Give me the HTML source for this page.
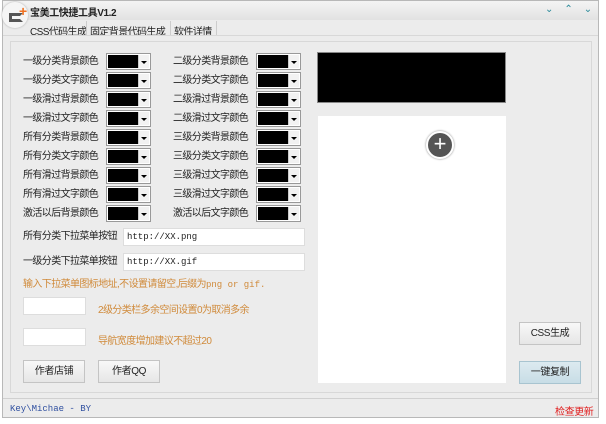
<!DOCTYPE html><html><head><meta charset="utf-8"><style>
body{margin:0;width:606px;height:424px;background:#fff;font-family:"Liberation Sans","Noto Sans CJK SC",sans-serif;font-size:10px;color:#222;position:relative;overflow:hidden}
.a{position:absolute;white-space:nowrap}
.win{left:2px;top:0;width:597px;height:418px;background:#ececec;border:1px solid #b8b8b8;box-sizing:border-box}
.lb{position:absolute;font-size:10px;letter-spacing:-0.6px;line-height:14px;white-space:nowrap}
.cb{position:absolute;width:45px;height:17px;border:1px solid #999;background:#fff;box-sizing:border-box}
.cb i{position:absolute;left:1px;top:1px;width:31px;height:13px;background:#000}
.cb b{position:absolute;right:1px;top:1px;width:10px;height:13px;background:#f2f2f2;border-left:1px solid #ccc}
.cb b:after{content:"";position:absolute;left:2px;top:6px;border:3px solid transparent;border-top:3px solid #000}
.in{position:absolute;background:#fff;border:1px solid #ddd;box-sizing:border-box;font-family:"Liberation Mono",monospace;font-size:9px;line-height:16px;padding-left:3px}
.bt{position:absolute;width:62px;height:23px;border:1px solid #c4c4c4;background:linear-gradient(#f8f8f8,#e6e6e6);box-sizing:border-box;text-align:center;line-height:21px;font-size:10px;letter-spacing:-0.4px}
.or{position:absolute;color:#d08a3a;font-size:10px;letter-spacing:-0.6px;white-space:nowrap}
</style></head><body>
<div class="a win"></div>
<div class="a" style="left:3px;top:1px;width:595px;height:19px;background:linear-gradient(#f4f4f4,#e2e2e2)"></div>
<div class="a" style="left:30px;top:4px;font-weight:bold;font-size:10px;letter-spacing:-0.4px">宝美工快捷工具V1.2</div>
<div class="a" style="left:2px;top:2px;width:26px;height:26px;border-radius:13px;background:#f5f5f5;box-shadow:0 0 2px #aaa"></div>
<div class="a" style="left:9px;top:13px;height:9px;border:3px solid #555;border-right-color:transparent;box-sizing:border-box;width:14px"></div>
<div class="a" style="left:19px;top:4px;color:#f07020;font-weight:bold;font-size:14px;line-height:14px">+</div>
<div class="a" style="left:545px;top:4px;color:#2a8a9a;font-size:10px;letter-spacing:11px">⌄⌃⌄</div>
<div class="a" style="left:30px;top:23px;font-size:10px;letter-spacing:-0.6px">CSS代码生成</div>
<div class="a" style="left:90px;top:23px;font-size:10px;letter-spacing:-0.6px">固定背景代码生成</div>
<div class="a" style="left:174px;top:23px;font-size:10px;letter-spacing:-0.6px">软件详情</div>
<div class="a" style="left:86px;top:21px;width:1px;height:14px;background:#ccc"></div>
<div class="a" style="left:170px;top:21px;width:1px;height:14px;background:#ccc"></div>
<div class="a" style="left:216px;top:21px;width:1px;height:14px;background:#ccc"></div>
<div class="a" style="left:3px;top:35px;width:595px;height:1px;background:#d8d8d8"></div>
<div class="a" style="left:10px;top:41px;width:582px;height:352px;border:1px solid #d8d8d8;box-sizing:border-box"></div>

<div class="lb" style="left:23px;top:55px">一级分类背景颜色</div><div class="cb" style="left:106px;top:53px"><i></i><b></b></div>
<div class="lb" style="left:23px;top:74px">一级分类文字颜色</div><div class="cb" style="left:106px;top:72px"><i></i><b></b></div>
<div class="lb" style="left:23px;top:93px">一级滑过背景颜色</div><div class="cb" style="left:106px;top:91px"><i></i><b></b></div>
<div class="lb" style="left:23px;top:112px">一级滑过文字颜色</div><div class="cb" style="left:106px;top:110px"><i></i><b></b></div>
<div class="lb" style="left:23px;top:131px">所有分类背景颜色</div><div class="cb" style="left:106px;top:129px"><i></i><b></b></div>
<div class="lb" style="left:23px;top:150px">所有分类文字颜色</div><div class="cb" style="left:106px;top:148px"><i></i><b></b></div>
<div class="lb" style="left:23px;top:169px">所有滑过背景颜色</div><div class="cb" style="left:106px;top:167px"><i></i><b></b></div>
<div class="lb" style="left:23px;top:188px">所有滑过文字颜色</div><div class="cb" style="left:106px;top:186px"><i></i><b></b></div>
<div class="lb" style="left:23px;top:207px">激活以后背景颜色</div><div class="cb" style="left:106px;top:205px"><i></i><b></b></div>

<div class="lb" style="left:173px;top:55px">二级分类背景颜色</div><div class="cb" style="left:256px;top:53px"><i></i><b></b></div>
<div class="lb" style="left:173px;top:74px">二级分类文字颜色</div><div class="cb" style="left:256px;top:72px"><i></i><b></b></div>
<div class="lb" style="left:173px;top:93px">二级滑过背景颜色</div><div class="cb" style="left:256px;top:91px"><i></i><b></b></div>
<div class="lb" style="left:173px;top:112px">二级滑过文字颜色</div><div class="cb" style="left:256px;top:110px"><i></i><b></b></div>
<div class="lb" style="left:173px;top:131px">三级分类背景颜色</div><div class="cb" style="left:256px;top:129px"><i></i><b></b></div>
<div class="lb" style="left:173px;top:150px">三级分类文字颜色</div><div class="cb" style="left:256px;top:148px"><i></i><b></b></div>
<div class="lb" style="left:173px;top:169px">三级滑过文字颜色</div><div class="cb" style="left:256px;top:167px"><i></i><b></b></div>
<div class="lb" style="left:173px;top:188px">三级滑过文字颜色</div><div class="cb" style="left:256px;top:186px"><i></i><b></b></div>
<div class="lb" style="left:173px;top:207px">激活以后文字颜色</div><div class="cb" style="left:256px;top:205px"><i></i><b></b></div>

<div class="lb" style="left:23px;top:230px">所有分类下拉菜单按钮</div><div class="in" style="left:123px;top:228px;width:182px;height:18px">http://XX.png</div>
<div class="lb" style="left:23px;top:255px">一级分类下拉菜单按钮</div><div class="in" style="left:123px;top:253px;width:182px;height:18px">http://XX.gif</div>
<div class="or" style="left:23px;top:275px">输入下拉菜单图标地址,不设置请留空,后缀为<span style="font-family:'Liberation Mono',monospace;font-size:9px;letter-spacing:0">png or gif.</span></div>
<div class="in" style="left:23px;top:297px;width:63px;height:18px"></div>
<div class="or" style="left:98px;top:301px">2级分类栏多余空间设置0为取消多余</div>
<div class="in" style="left:23px;top:328px;width:63px;height:18px"></div>
<div class="or" style="left:98px;top:332px">导航宽度增加建议不超过20</div>
<div class="bt" style="left:23px;top:360px">作者店铺</div>
<div class="bt" style="left:98px;top:360px">作者QQ</div>

<div class="a" style="left:317px;top:52px;width:189px;height:51px;background:#000;border:1px solid #888;box-sizing:border-box"></div>
<div class="a" style="left:318px;top:116px;width:188px;height:267px;background:#fff"></div>
<div class="a" style="left:426px;top:131px;width:28px;height:28px;border-radius:50%;background:#555;border:2px solid #fff;box-shadow:0 0 2px #888;box-sizing:border-box;color:#fff;text-align:center;font-size:22px;line-height:22px">+</div>
<div class="bt" style="left:519px;top:322px">CSS生成</div>
<div class="bt" style="left:519px;top:361px;background:linear-gradient(#dceaf0,#c8dde6);border-color:#a8c4d0">一键复制</div>

<div class="a" style="left:3px;top:398px;width:595px;height:1px;background:#d0d0d0"></div>
<div class="a" style="left:10px;top:404px;color:#3050a0;font-family:'Liberation Mono',monospace;font-size:9px">Key\Michae - BY</div>
<div class="a" style="left:555px;top:403px;color:#e02020;font-size:10px;letter-spacing:-0.4px">检查更新</div>
</body></html>
